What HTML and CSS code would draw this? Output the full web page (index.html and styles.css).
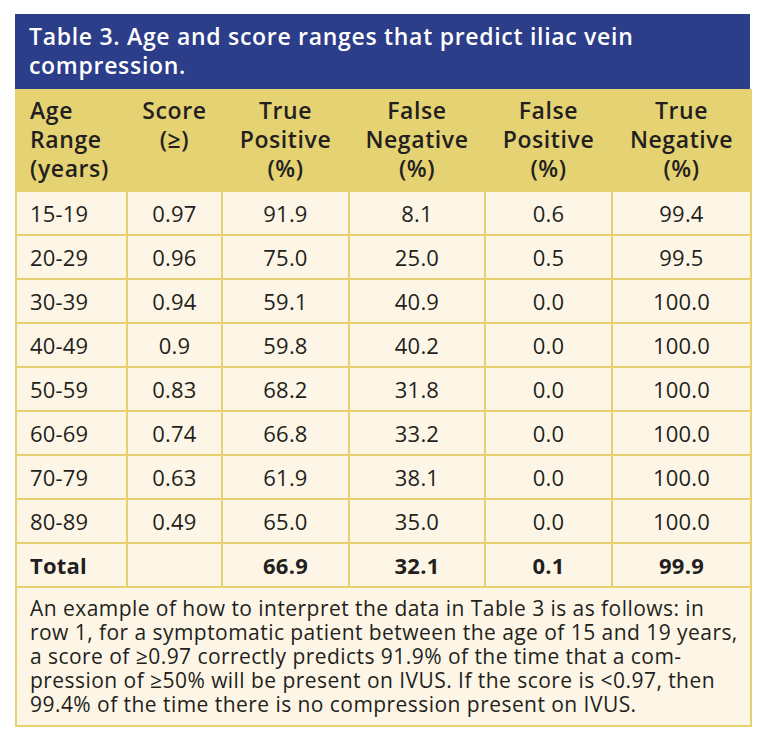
FILE: index.html
```html
<!DOCTYPE html>
<html>
<head>
<meta charset="utf-8">
<link rel="stylesheet" href="styles.css">
</head>
<body>
<div class="box">
  <div class="title">Table 3. Age and score ranges that predict iliac vein compression.</div>
  <table class="tbl">
    <colgroup>
      <col class="c1"><col class="c2"><col class="c3"><col class="c4"><col class="c5"><col class="c6">
    </colgroup>
    <thead>
      <tr>
        <th class="left">Age<br>Range<br>(years)</th>
        <th>Score<br>(≥)</th>
        <th>True<br>Positive<br>(%)</th>
        <th>False<br>Negative<br>(%)</th>
        <th>False<br>Positive<br>(%)</th>
        <th>True<br>Negative<br>(%)</th>
      </tr>
    </thead>
    <tbody>
      <tr><td class="left">15-19</td><td>0.97</td><td>91.9</td><td>8.1</td><td>0.6</td><td>99.4</td></tr>
      <tr><td class="left">20-29</td><td>0.96</td><td>75.0</td><td>25.0</td><td>0.5</td><td>99.5</td></tr>
      <tr><td class="left">30-39</td><td>0.94</td><td>59.1</td><td>40.9</td><td>0.0</td><td>100.0</td></tr>
      <tr><td class="left">40-49</td><td>0.9</td><td>59.8</td><td>40.2</td><td>0.0</td><td>100.0</td></tr>
      <tr><td class="left">50-59</td><td>0.83</td><td>68.2</td><td>31.8</td><td>0.0</td><td>100.0</td></tr>
      <tr><td class="left">60-69</td><td>0.74</td><td>66.8</td><td>33.2</td><td>0.0</td><td>100.0</td></tr>
      <tr><td class="left">70-79</td><td>0.63</td><td>61.9</td><td>38.1</td><td>0.0</td><td>100.0</td></tr>
      <tr><td class="left">80-89</td><td>0.49</td><td>65.0</td><td>35.0</td><td>0.0</td><td>100.0</td></tr>
      <tr class="total"><td class="left">Total</td><td></td><td>66.9</td><td>32.1</td><td>0.1</td><td>99.9</td></tr>
      <tr><td class="note" colspan="6">An example of how to interpret the data in Table 3 is as follows: in<br>row 1, for a symptomatic patient between the age of 15 and 19 years,<br>a score of ≥0.97 correctly predicts 91.9% of the time that a com-<br>pression of ≥50% will be present on IVUS. If the score is &lt;0.97, then<br>99.4% of the time there is no compression present on IVUS.</td></tr>
    </tbody>
  </table>
</div>
</body>
</html>
```
FILE: styles.css
```css
html, body {
  margin: 0;
  padding: 0;
  background: #ffffff;
}
body {
  font-family: "Open Sans", "Noto Sans", sans-serif;
  color: #231f20;
}
.box {
  margin: 14px 0 0 15px;
  width: 735px;
}
.title {
  background: #2c3d89;
  color: #ffffff;
  font-weight: 600;
  font-size: 23px;
  letter-spacing: 0.7px;
  line-height: 29px;
  padding: 8px 14px 9px 14px;
}
.tbl {
  width: 735px;
  border-collapse: collapse;
  table-layout: fixed;
  background: #fdf6e6;
}
.c1 { width: 111px; }
.c2 { width: 95px; }
.c3 { width: 127px; }
.c4 { width: 136px; }
.c5 { width: 127px; }
.c6 { width: 139px; }
.tbl th, .tbl td {
  border: 2px solid #e5d270;
  text-align: center;
  padding: 0 2px;
  font-size: 22px;
}
.tbl thead th {
  background: #e5d272;
  border-top: none;
  font-weight: 600;
  font-size: 23px;
  letter-spacing: 0.6px;
  line-height: 29px;
  padding: 7px 2px 7px 2px;
  height: 87px;
  vertical-align: top;
}
.tbl tbody td {
  height: 42px;
  line-height: 26px;
  font-weight: 400;
  letter-spacing: 0.2px;
}
.tbl .left {
  text-align: left;
  padding-left: 13px;
}
.tbl tr.total td {
  font-weight: 700;
}
.tbl td.note {
  text-align: left;
  font-size: 21px;
  letter-spacing: 0.45px;
  line-height: 24px;
  padding: 8px 13px 9px 13px;
  height: auto;
  white-space: nowrap;
}
```
